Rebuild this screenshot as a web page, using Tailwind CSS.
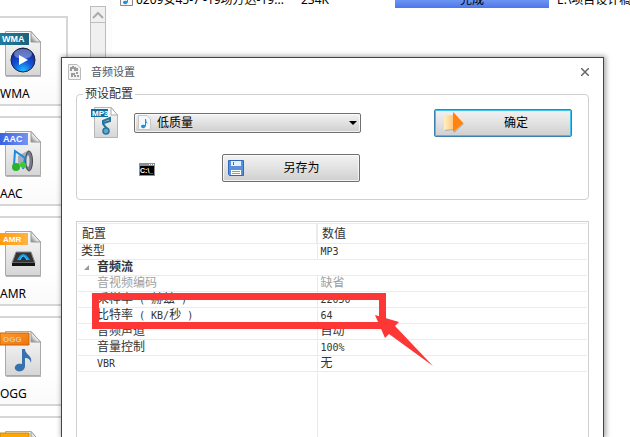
<!DOCTYPE html>
<html lang="zh-CN">

<head>
    <meta charset="UTF-8" />
    <meta name="viewport" content="width=device-width, initial-scale=1.0" />
    <title>音频设置</title>
    <script src="https://cdn.jsdelivr.net/npm/@tailwindcss/browser@4"></script>
</head>

<body class="relative h-screen overflow-hidden bg-white font-['Liberation_Sans','Noto_Sans_CJK_SC',sans-serif] text-xs text-black">

    <!-- 共用的纸张图形 -->
    <svg class="absolute size-0" aria-hidden="true">
        <defs>
            <linearGradient id="paper" x1="0" y1="0" x2="0" y2="1">
                <stop offset="0" stop-color="#fafafa" />
                <stop offset="1" stop-color="#d6d6d6" />
            </linearGradient>
            <linearGradient id="fold" x1="0" y1="1" x2="1" y2="0">
                <stop offset="0" stop-color="#777" />
                <stop offset=".5" stop-color="#fff" />
            </linearGradient>
            <linearGradient id="teal" x1="0" y1="0" x2="1" y2="0">
                <stop offset="0" stop-color="#207c9e" />
                <stop offset="1" stop-color="#1c617e" />
            </linearGradient>
            <linearGradient id="blue" x1="0" y1="0" x2="1" y2="0">
                <stop offset="0" stop-color="#3b63e0" />
                <stop offset="1" stop-color="#7593f2" />
            </linearGradient>
            <linearGradient id="amber" x1="0" y1="0" x2="1" y2="0">
                <stop offset="0" stop-color="#ff9c10" />
                <stop offset="1" stop-color="#ffb340" />
            </linearGradient>
            <linearGradient id="orange" x1="0" y1="0" x2="1" y2="1">
                <stop offset="0" stop-color="#ff9b2a" />
                <stop offset="1" stop-color="#f0720c" />
            </linearGradient>
            <linearGradient id="arrow" x1="0" y1="0" x2="1" y2="0">
                <stop offset="0" stop-color="#fff0c4" />
                <stop offset="1" stop-color="#ff9a30" />
            </linearGradient>
            <radialGradient id="ball" cx=".5" cy=".95" r=".95">
                <stop offset="0" stop-color="#1cc0ff" />
                <stop offset=".45" stop-color="#1550d8" />
                <stop offset="1" stop-color="#0c1d80" />
            </radialGradient>
            <g id="sheet">
                <path d="M5.500 1.500H31L40.500 12V45.500H5.500Z" fill="url(#paper)" stroke="#a9a9a9" />
                <path d="M6 46.500H41" stroke="#888" opacity=".6" />
                <path d="M31 1.500V12H40.500Z" fill="url(#fold)" stroke="#999" />
            </g>
        </defs>
    </svg>

    <div class="flex h-full">
        <!-- 格式列表 -->
        <nav class="flex w-[68px] shrink-0 flex-col gap-2.5 overflow-hidden pt-4">
            <a href="#" class="flex h-[90px] shrink-0 flex-col border-2 border-l-0 border-[#d6d6d6] bg-linear-to-b from-white from-60% to-[#fafafa] pt-3">
                <svg class="h-12 w-[42px]" viewBox="0 0 42 48">
                    <use href="#sheet" />
                    <path d="M0 3H29V15H0Z" fill="url(#teal)" />
                    <text x="2" y="12" font-size="9" font-weight="bold" font-family="Liberation Sans" fill="#fff">WMA</text>
                    <circle cx="23" cy="30" r="12" fill="url(#ball)" stroke="#1b2240" />
                    <ellipse cx="23" cy="24" rx="9" ry="5" fill="#fff" opacity=".35" />
                    <path d="M19 25L28 30L19 35Z" fill="#fff" />
                </svg>
                <span class="pt-2 font-['Noto_Sans',sans-serif] leading-4">WMA</span>
            </a>
            <a href="#" class="flex h-[90px] shrink-0 flex-col border-2 border-l-0 border-[#d6d6d6] bg-linear-to-b from-white from-60% to-[#fafafa] pt-3">
                <svg class="h-12 w-[42px]" viewBox="0 0 42 48">
                    <use href="#sheet" />
                    <path d="M0 3H28V15H0Z" fill="url(#blue)" />
                    <text x="3" y="12" font-size="9" font-weight="bold" font-family="Liberation Sans" fill="#fff">AAC</text>
                    <path d="M18 26L29 20V40L18 35Z" fill="#a8adb8" />
                    <ellipse cx="29" cy="31" rx="3.500" ry="10" fill="#777c88" stroke="#454a55" />
                    <ellipse cx="28" cy="31" rx="1.500" ry="6" fill="#d8dce4" />
                    <path d="M14 35L15 21L25 28L23 39" fill="none" stroke="#1b8ae0" stroke-width="2" />
                    <ellipse cx="16" cy="37" rx="4" ry="4" fill="#27b32b" />
                    <circle cx="23" cy="35" r="3" fill="#3ccc32" />
                </svg>
                <span class="pt-2 font-['Noto_Sans',sans-serif] leading-4">AAC</span>
            </a>
            <a href="#" class="flex h-[90px] shrink-0 flex-col border-2 border-l-0 border-[#d6d6d6] bg-linear-to-b from-white from-60% to-[#fafafa] pt-3">
                <svg class="h-12 w-[42px]" viewBox="0 0 42 48">
                    <use href="#sheet" />
                    <path d="M0 3H28V15H0Z" fill="url(#amber)" />
                    <text x="3" y="12" font-size="8" font-weight="bold" font-family="Liberation Sans" fill="#fff">AMR</text>
                    <path d="M16 22H31L35 33H12Z" fill="#353535" stroke="#8c8c8c" />
                    <path d="M12 33H35V36H12Z" fill="#151515" />
                    <path d="M17 30Q23 18 30 30Z" fill="#159cea" />
                    <path d="M20 30Q23 22 27 30" fill="#063a70" stroke="#5cc9ff" />
                </svg>
                <span class="pt-2 font-['Noto_Sans',sans-serif] leading-4">AMR</span>
            </a>
            <a href="#" class="flex h-[90px] shrink-0 flex-col border-2 border-l-0 border-[#d6d6d6] bg-linear-to-b from-white from-60% to-[#fafafa] pt-3">
                <svg class="h-12 w-[42px]" viewBox="0 0 42 48">
                    <use href="#sheet" />
                    <path d="M0 3H29V15H0Z" fill="url(#orange)" stroke="#c8640f" />
                    <text x="3" y="12" font-size="8" font-weight="bold" font-family="Liberation Sans" fill="#dfc9b0">OGG</text>
                    <path d="M15 39C14 35 18 33 22 34V19H25C25 25 33 25 31 33C30 29 28 28 25 28V36C25 42 17 43 15 39Z" fill="#3672ae" />
                </svg>
                <span class="pt-2 font-['Noto_Sans',sans-serif] leading-4">OGG</span>
            </a>
            <a href="#" aria-label="MP2" class="flex h-[90px] shrink-0 flex-col border-2 border-l-0 border-[#d6d6d6] bg-white pt-3">
                <svg class="h-12 w-[42px]" viewBox="0 0 42 48">
                    <use href="#sheet" />
                    <path d="M0 3H29V15H0Z" fill="#ffa800" stroke="#c88a0f" />
                    <text x="3" y="12" font-size="8" font-weight="bold" font-family="Liberation Sans" fill="#4a5a9a">MP2</text>
                </svg>
            </a>
        </nav>

        <!-- 滚动条 -->
        <div class="mt-1.5 ml-[22px] w-4 shrink-0 border border-[#bdbdbd] bg-[#f0f0f0]">
            <button type="button" aria-label="向上滚动" class="flex h-4 w-full items-center justify-center border-b border-[#bdbdbd]">
                <svg class="h-2 w-3" viewBox="0 0 12 8" fill="none" stroke="#ababab" stroke-width="2">
                    <path d="M1 7L6 2L11 7" />
                </svg>
            </button>
        </div>
        <div class="w-1.5 shrink-0 bg-[#fcfcfc]"></div>

        <!-- 任务列表 -->
        <main class="min-w-0 flex-1">
            <div class="-mt-2 flex h-4 items-center pl-2 font-['Noto_Sans','Noto_Sans_CJK_SC',sans-serif] whitespace-nowrap">
                <svg class="h-4 w-3.5 shrink-0" viewBox="0 0 14 16">
                    <path d="M.5 .5H12.500V13.500H.5Z" fill="#f8f8f8" stroke="#888" />
                    <path d="M3 10Q4 8 7 9V3H8Q9 6 11 8Q10 7 8 7V10Q6 14 3 11Z" fill="#1596e0" />
                </svg>
                <span class="w-[167px] shrink-0 pl-0.5">0209安45-7 -19场方达-19...</span>
                <span class="w-[94px] shrink-0">234K</span>
                <span class="h-4 w-[154px] shrink-0 bg-linear-to-b from-[#8cb4f4] to-[#4f75ee] text-center leading-4">完成</span>
                <span class="pl-2">E:\项目设计稿</span>
            </div>
        </main>
    </div>

    <!-- 音频设置窗口 -->
    <div role="dialog" aria-labelledby="dlgTitle"
        class="absolute top-[57px] right-[26px] bottom-0 left-[61px] flex flex-col border border-b-0 border-[#444] bg-white px-3.5 shadow-[1px_0_5px_1px_rgba(0,0,0,0.35)]">
        <header class="-ml-2 flex h-7 shrink-0 items-center">
            <svg class="h-4 w-[13px]" viewBox="0 0 13 16">
                <path d="M.5 .5H9L12.500 4V15.500H.5Z" fill="#f3f3f3" stroke="#bbb" />
                <path d="M3 3V7M5 2V5M7 3V7M9 4V7M3 10H5M6 9V11M8 9H10M3 12H5M7 11V13M9 12H11" stroke="#444" />
            </svg>
            <h1 id="dlgTitle" class="flex-1 pl-2.5 text-[11px] text-[#4c5662]">音频设置</h1>
            <button type="button" aria-label="关闭" class="-mr-1 p-1">
                <svg class="size-2" viewBox="0 0 8 8" stroke="#666" stroke-width="1.500">
                    <path d="M0 0L8 8M8 0L0 8" />
                </svg>
            </button>
        </header>

        <fieldset class="h-[114px] shrink-0 rounded-sm border border-[#d0d0d0] pr-4 pl-3.5">
            <legend class="-ml-2 px-0.5 leading-4 text-[#333]">预设配置</legend>
            <div class="mt-[5px] flex h-8 items-center">
                <svg class="h-8 w-7" viewBox="0 0 28 32">
                    <path d="M3.500 .5H20L26.500 8V30.500H3.500Z" fill="url(#paper)" stroke="#b5b5b5" />
                    <path d="M20 .5V8H26.500Z" fill="#fff" stroke="#aaa" />
                    <path d="M0 2H17V10H0Z" fill="#0f709f" />
                    <text x="1" y="9" font-size="8" font-weight="bold" font-family="Liberation Sans" fill="#fff">MP3</text>
                    <path d="M17 23L12 17V14L19 11V14L13 16" fill="none" stroke="#26759c" stroke-width="2" />
                    <circle cx="15" cy="24" r="3" fill="#5ba8c8" stroke="#26759c" stroke-width="1.500" />
                </svg>
                <div class="relative ml-[15px] w-[227px]">
                    <select aria-label="预设配置"
                        class="block h-5 w-full appearance-none rounded-xs border border-[#707070] bg-linear-to-b from-[#f2f2f2] to-[#cfcfcf] pl-[22px] text-xs leading-4 inset-ring inset-ring-white/70">
                        <option>低质量</option>
                    </select>
                    <svg class="pointer-events-none absolute top-0.5 left-1 h-4 w-3.5" viewBox="0 0 14 16">
                        <path d="M.5 .5H9L12.500 4V14.500H.5Z" fill="#f5f8fc" stroke="#c6c6c6" />
                        <path d="M3 11Q4 9 7 10V4H8Q8 7 10 9Q9 8 8 8V11Q6 15 3 12Z" fill="#1596e0" />
                    </svg>
                    <svg class="pointer-events-none absolute top-2 right-1 h-1 w-2" viewBox="0 0 8 4">
                        <path d="M0 0H8L4 4Z" />
                    </svg>
                </div>
                <button type="button"
                    class="ml-auto flex h-7 w-[138px] items-center rounded-xs border border-[#3c7fb1] bg-linear-to-b from-[#f2f2f2] via-[#e2e2e2] to-[#cfcfcf] inset-ring inset-ring-[#3fc4f0]">
                    <svg class="ml-2 h-[22px] w-[22px]" viewBox="0 0 22 22">
                        <path d="M2 6L11 4V1L21 12L11 21V18L2 19Z" fill="#888" opacity=".5" />
                        <path d="M1 4L10 3V0L20 11L10 20V17L1 18Z" fill="url(#arrow)" />
                        <path d="M10 0L20 11L10 20Z" fill="#ff8212" />
                    </svg>
                    <span class="flex-1 pr-2 pl-1 text-center">确定</span>
                </button>
            </div>
            <div class="mt-[15px] flex h-7 items-center pl-12">
                <svg class="mt-0.5 h-[13px] w-4" viewBox="0 0 16 13">
                    <path d="M0 0H16V13H0Z" fill="#8c9294" />
                    <path d="M1 3H15V12H1Z" />
                    <path d="M10 1.500H11M12 1.500H13M14 1.500H15" stroke="#fff" />
                    <text x="1" y="10" font-size="7" font-weight="bold" font-family="Liberation Sans" fill="#fff">C:\_</text>
                </svg>
                <button type="button"
                    class="ml-[67px] flex h-7 w-[138px] items-center rounded-xs border border-[#707070] bg-linear-to-b from-[#f2f2f2] via-[#e2e2e2] to-[#cfcfcf] inset-ring inset-ring-white/70">
                    <svg class="ml-[5px] size-4" viewBox="0 0 16 16">
                        <path d="M.5 .5H15.500V15.500H1.500L.5 14.500Z" fill="#5b91dc" stroke="#2f68b8" />
                        <path d="M3 1H13V6H3Z" fill="#e6f0fb" />
                        <path d="M5 2H6V5H5Z" fill="#3a70bc" />
                        <path d="M3 10H13V15H3Z" fill="#fff" />
                        <path d="M4 11.500H12M4 13.500H12" stroke="#78bd3e" />
                    </svg>
                    <span class="flex-1 pr-2 pl-2 text-center">另存为</span>
                </button>
            </div>
        </fieldset>

        <!-- 参数表 -->
        <div class="mt-[21px] min-h-0 flex-1 overflow-hidden border border-b-0 border-[#d0d0d0] px-px pt-px">
            <table class="w-full table-fixed border-collapse font-['DejaVu_Sans_Mono','Noto_Sans_CJK_SC',monospace] text-xs leading-[15px] text-[#333]">
                <thead>
                    <tr class="h-5 border-y border-[#ebebeb] text-left">
                        <th scope="col" class="w-[239px] p-0 pt-0.5 pl-1 font-normal">配置</th>
                        <th scope="col" class="border-l-2 border-[#ebebeb] p-0 pt-0.5 pl-1 font-normal">数值</th>
                    </tr>
                </thead>
                <tbody>
                    <tr class="h-4 border-b border-[#ebebeb]">
                        <td class="p-0 pl-[3px]">类型</td>
                        <td class="border-l border-[#ebebeb] p-0 pl-[3px] text-[10px]">MP3</td>
                    </tr>
                    <tr class="h-4 border-b border-[#ebebeb]">
                        <td colspan="2" class="p-0 font-bold">
                            <div class="flex h-[15px] items-center pl-1.5">
                                <svg class="mr-2 size-[5px]" viewBox="0 0 5 5" fill="#999">
                                    <path d="M5 0V5H0Z" />
                                </svg>
                                音频流
                            </div>
                        </td>
                    </tr>
                    <tr class="h-4 border-b border-[#ebebeb] text-[#a0a0a0]">
                        <td class="p-0 pl-[19px]">音视频编码</td>
                        <td class="border-l border-[#ebebeb] p-0 pl-[3px]">缺省</td>
                    </tr>
                    <tr class="h-4 border-b border-[#ebebeb]">
                        <td class="p-0 pl-[19px]">采样率<span class="text-[10px]"> ( </span>赫兹<span class="text-[10px]"> )</span></td>
                        <td class="border-l border-[#ebebeb] p-0 pl-[3px] text-[10px]">22050</td>
                    </tr>
                    <tr class="h-4 border-b border-[#ebebeb]">
                        <td class="p-0 pl-[19px]">比特率<span class="text-[10px]"> ( KB/</span>秒<span class="text-[10px]"> )</span></td>
                        <td class="border-l border-[#ebebeb] p-0 pl-[3px] text-[10px]">64</td>
                    </tr>
                    <tr class="h-4 border-b border-[#ebebeb]">
                        <td class="p-0 pl-[19px]">音频声道</td>
                        <td class="border-l border-[#ebebeb] p-0 pl-[3px]">自动</td>
                    </tr>
                    <tr class="h-4 border-b border-[#ebebeb]">
                        <td class="p-0 pl-[19px]">音量控制</td>
                        <td class="border-l border-[#ebebeb] p-0 pl-[3px] text-[10px]">100%</td>
                    </tr>
                    <tr class="h-4 border-b border-[#ebebeb]">
                        <td class="p-0 pl-[19px] text-[10px]">VBR</td>
                        <td class="border-l border-[#ebebeb] p-0 pl-[3px]">无</td>
                    </tr>
                    <tr class="h-20">
                        <td class="p-0"></td>
                        <td class="border-l border-[#ebebeb] p-0"></td>
                    </tr>
                </tbody>
            </table>
        </div>
    </div>

    <!-- 红框和箭头标注 -->
    <div class="pointer-events-none absolute top-[293px] left-[92px] h-9 w-[294px] border-7 border-[#fc3735]"></div>
    <svg class="pointer-events-none absolute top-[315px] left-[375px] h-[52px] w-[59px]" viewBox="0 0 59 52" fill="#fc3735">
        <path d="M0 0L24 7L20 11L58 51L14 19L10 23Z" />
    </svg>
</body>

</html>
